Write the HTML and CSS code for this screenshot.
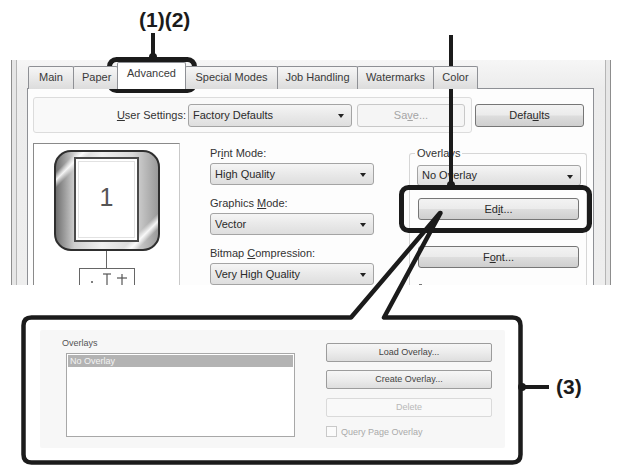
FILE: index.html
```html
<!DOCTYPE html>
<html>
<head>
<meta charset="utf-8">
<title>Advanced tab - Overlays</title>
<link rel="stylesheet" href="styles.css">
</head>
<body>
<div class="page">
  <div class="window">
    <div class="client">
      <div class="tabs">
        <div class="tab t-main">Main</div>
        <div class="tab t-paper">Paper</div>
        <div class="tab tab-active t-adv">Advanced</div>
        <div class="tab t-special">Special Modes</div>
        <div class="tab t-job">Job Handling</div>
        <div class="tab t-wm">Watermarks</div>
        <div class="tab t-color">Color</div>
      </div>
      <div class="pane">
        <div class="row-top">
          <div class="settings-panel">
            <span class="lbl-user"><u>U</u>ser Settings:</span>
            <div class="select sel-user">Factory Defaults<span class="arrow"></span></div>
            <div class="btn btn-disabled btn-save">Sa<u>v</u>e...</div>
          </div>
          <div class="btn btn-defaults">Defa<u>u</u>lts</div>
        </div>
        <div class="row-main">
          <div class="preview">
            <div class="frame">
              <div class="sheet"><span class="sheet-num">1</span></div>
            </div>
            <div class="stem"></div>
            <div class="bind-box">
              <svg class="bind-icon" width="54" height="18" viewBox="0 0 54 18">
                <line x1="12" y1="12" x2="12" y2="14" stroke="#555" stroke-width="1.5"/>
                <line x1="23" y1="5" x2="31" y2="5" stroke="#555" stroke-width="1.2"/>
                <line x1="27" y1="5" x2="27" y2="18" stroke="#555" stroke-width="1.2"/>
                <line x1="37" y1="9" x2="47" y2="9" stroke="#555" stroke-width="1.2"/>
                <line x1="42" y1="5" x2="42" y2="18" stroke="#555" stroke-width="1.2"/>
              </svg>
            </div>
          </div>
          <div class="fields">
            <div class="field">
              <div class="field-label">Pr<u>i</u>nt Mode:</div>
              <div class="select sel-field">High Quality<span class="arrow"></span></div>
            </div>
            <div class="field">
              <div class="field-label">Graphics <u>M</u>ode:</div>
              <div class="select sel-field">Vector<span class="arrow"></span></div>
            </div>
            <div class="field">
              <div class="field-label">Bitmap <u>C</u>ompression:</div>
              <div class="select sel-field">Very High Quality<span class="arrow"></span></div>
            </div>
          </div>
          <div class="group">
            <div class="legend">Overlays</div>
            <div class="select sel-overlay">No Overlay<span class="arrow"></span></div>
            <div class="btn btn-edit">Ed<u>i</u>t...</div>
            <div class="btn btn-font">F<u>o</u>nt...</div>
            <div class="stub"></div>
          </div>
        </div>
      </div>
    </div>
  </div>

  <div class="ov-panel">
    <div class="ov-left">
      <div class="ov-label">Overlays</div>
      <div class="listbox">
        <div class="list-item">No Overlay</div>
      </div>
    </div>
    <div class="ov-right">
      <div class="sbtn">Load Overlay...</div>
      <div class="sbtn">Create Overlay...</div>
      <div class="sbtn sbtn-disabled">Delete</div>
      <div class="check-row"><span class="check"></span><span>Query Page Overlay</span></div>
    </div>
  </div>
</div>

<svg class="annot" width="618" height="473" viewBox="0 0 618 473">
  <g stroke="#1b1b1b" fill="none" stroke-linejoin="round" stroke-linecap="butt">
    <line x1="153" y1="33" x2="153" y2="58" stroke-width="4"/>
    <rect x="109.5" y="59.5" width="85" height="31" rx="7" stroke-width="5"/>
    <line x1="451" y1="35" x2="451" y2="186" stroke-width="4"/>
    <rect x="401.5" y="187.5" width="188" height="43" rx="7" stroke-width="5"/>
    <path d="M351 317.5 L440 213 L440.5 213 L384 317.5 H512.5 Q520.5 317.5 520.5 325.5 V454.5 Q520.5 462.5 512.5 462.5 H31.5 Q23.5 462.5 23.5 454.5 V325.5 Q23.5 317.5 31.5 317.5 Z" stroke-width="4.5"/>
    <line x1="521" y1="387" x2="549" y2="387" stroke-width="4"/>
  </g>
  <g fill="#1b1b1b">
    <circle cx="153" cy="57" r="4"/>
    <circle cx="451" cy="185" r="4"/>
    <circle cx="522" cy="387" r="4"/>
  </g>
</svg>
<div class="callout-label label-12">(1)(2)</div>
<div class="callout-label label-3">(3)</div>
</body>
</html>
```

FILE: styles.css
```css
* { box-sizing: border-box; }
html, body { margin: 0; padding: 0; }
body {
  width: 618px;
  height: 473px;
  position: relative;
  overflow: hidden;
  background: #fff;
  font-family: "Liberation Sans", Arial, sans-serif;
  color: #333;
}
u { text-decoration: underline; text-underline-offset: 1px; }

.page { padding-top: 60px; }

/* ---------- dialog window ---------- */
.window {
  margin-left: 11px;
  width: 600px;
  height: 225px;
  overflow: hidden;
  border-left: 1px solid #8d8d8d;
  border-right: 1px solid #8d8d8d;
  background: #e6e6e6;
  padding: 0 4px;
}
.client {
  height: 100%;
  border-left: 1px solid #b5b5b5;
  border-right: 1px solid #b5b5b5;
  background: linear-gradient(#f6f6f6, #ececec 28px, #eeeeee);
  padding: 2px 11px 0 10px;
}
.tabs {
  display: flex;
  align-items: flex-end;
  height: 27px;
  margin-bottom: -1px;
  padding-left: 1px;
  position: relative;
  z-index: 2;
}
.tab {
  height: 23px;
  margin-right: -1px;
  border: 1px solid #8e9095;
  border-bottom: none;
  border-radius: 2px 2px 0 0;
  background: linear-gradient(#f6f6f6, #e9e9e9 50%, #dcdcdc);
  font-size: 11px;
  line-height: 21px;
  text-align: center;
  color: #3a3a3a;
  white-space: nowrap;
  overflow: hidden;
}
.tab-active {
  height: 27px;
  background: #fff;
  position: relative;
  z-index: 3;
  line-height: 20px;
}
.t-main { width: 46px; }
.t-paper { width: 45px; text-align: left; padding-left: 8px; }
.t-adv { width: 69px; }
.t-special { width: 93px; }
.t-job { width: 81px; }
.t-wm { width: 77px; }
.t-color { width: 45px; }

.pane {
  height: 200px;
  border: 1px solid #8e9095;
  background: #fdfdfd;
  padding: 8px 0 0 5px;
}

.row-top { display: flex; align-items: center; }
.settings-panel {
  width: 439px;
  height: 36px;
  border: 1px solid #dcdcdc;
  border-radius: 3px;
  background: #f9f9f9;
  display: flex;
  align-items: center;
}
.lbl-user {
  width: 152px;
  text-align: right;
  font-size: 11px;
  color: #333;
}
.select {
  position: relative;
  height: 23px;
  border: 1px solid #a4a4a4;
  border-radius: 3px;
  background: linear-gradient(#f5f5f5, #e9e9e9 50%, #dedede);
  font-size: 11px;
  line-height: 21px;
  padding-left: 4px;
  color: #2a2a2a;
  white-space: nowrap;
  overflow: hidden;
}
.arrow {
  position: absolute;
  right: 7px;
  top: 9px;
  width: 0;
  height: 0;
  border-left: 3.5px solid transparent;
  border-right: 3.5px solid transparent;
  border-top: 4px solid #222;
}
.sel-user { width: 164px; margin-left: 2px; }
.btn {
  height: 23px;
  border: 1px solid #767676;
  border-radius: 3px;
  background: linear-gradient(#f3f3f3, #ebebeb 48%, #dddddd 52%, #cfcfcf);
  font-size: 11px;
  line-height: 21px;
  text-align: center;
  color: #2a2a2a;
}
.btn-disabled {
  border-color: #c8c8c8;
  background: #f5f5f5;
  color: #a5a5a5;
}
.btn-save { width: 108px; margin-left: 5px; }
.btn-defaults { width: 109px; margin-left: 3px; }

.row-main { display: flex; align-items: flex-start; margin-top: 10px; }

.preview {
  width: 147px;
  height: 150px;
  border: 1px solid #8a8a8a;
  border-right-color: #c9c9c9;
  border-bottom: none;
  background: #fff;
  display: flex;
  flex-direction: column;
  align-items: center;
  padding-top: 6px;
}
.frame {
  width: 106px;
  height: 101px;
  border: 2px solid #2e2e2e;
  border-radius: 17px;
  background:
    linear-gradient(135deg, rgba(255,255,255,0) 10%, rgba(255,255,255,0.9) 14%, rgba(255,255,255,0) 18%, rgba(255,255,255,0) 82%, rgba(255,255,255,0.9) 86%, rgba(255,255,255,0) 90%),
    linear-gradient(90deg, #6f6f6f, #cfcfcf 18%, #efefef 45%, #d9d9d9 75%, #9a9a9a);
  display: flex;
  justify-content: center;
  padding-top: 5px;
}
.sheet {
  width: 65px;
  height: 85px;
  border: 2px solid #4a4a4a;
  background: #fff;
  box-shadow: inset 0 0 0 2px #fff, inset 0 0 0 3px #e2e2e2;
  display: flex;
  align-items: center;
  justify-content: center;
}
.sheet-num { font-size: 25px; color: #555; margin-top: -4px; }
.stem { width: 1px; height: 17px; background: #666; }
.bind-box {
  width: 56px;
  height: 20px;
  border: 1px solid #666;
  border-bottom: none;
}
.bind-icon { display: block; }

.fields { width: 164px; margin-left: 30px; padding-top: 3px; }
.field + .field { margin-top: 11px; }
.field-label {
  font-size: 11px;
  line-height: 14px;
  margin-bottom: 3px;
  color: #333;
}
.sel-field { height: 22px; line-height: 20px; }

.group {
  width: 178px;
  height: 150px;
  margin-left: 35px;
  margin-top: 10px;
  border: 1px solid #d6d6d6;
  border-bottom: none;
  border-radius: 3px 3px 0 0;
  padding: 0 5px 0 7px;
}
.legend {
  width: fit-content;
  margin: -8px 0 0 -2px;
  padding: 0 2px;
  background: #fdfdfd;
  font-size: 11px;
  line-height: 14px;
  color: #333;
}
.sel-overlay { width: 164px; height: 21px; line-height: 19px; margin-top: 5px; }
.btn-edit { width: 161px; height: 22px; line-height: 20px; margin: 12px 0 0 1px; }
.btn-font { width: 161px; height: 22px; line-height: 20px; margin: 26px 0 0 1px; }
.stub { width: 3px; height: 1px; background: #777; margin: 16px 0 0 2px; }

/* ---------- overlay settings panel in callout ---------- */
.ov-panel {
  margin: 45px 0 0 40px;
  width: 465px;
  height: 118px;
  background: #f7f7f7;
  border-radius: 2px;
  display: flex;
  padding: 7px 0 0 22px;
}
.ov-left { width: 233px; }
.ov-label { font-size: 9px; line-height: 12px; color: #555; }
.listbox {
  width: 229px;
  height: 84px;
  margin: 4px 0 0 4px;
  border: 1px solid #a8a8a8;
  background: #fff;
  padding: 1px;
}
.list-item {
  height: 12px;
  background: #b3b3b3;
  color: #f4f4f4;
  font-size: 9px;
  line-height: 12px;
  padding-left: 2px;
}
.ov-right { margin: 6px 0 0 31px; width: 166px; }
.sbtn {
  height: 19px;
  border: 1px solid #9c9c9c;
  border-radius: 2px;
  background: linear-gradient(#f6f6f6, #ececec 50%, #dedede);
  font-size: 9px;
  line-height: 17px;
  text-align: center;
  color: #444;
}
.sbtn + .sbtn { margin-top: 8px; }
.sbtn-disabled { border-color: #dadada; background: #f9f9f9; color: #b8b8b8; margin-top: 9px !important; }
.check-row {
  display: flex;
  align-items: center;
  margin-top: 9px;
  font-size: 9px;
  color: #aaa;
}
.check {
  width: 11px;
  height: 11px;
  border: 1px solid #c9c9c9;
  background: #fbfbfb;
  margin-right: 4px;
}

/* ---------- annotations ---------- */
.annot { position: absolute; left: 0; top: 0; pointer-events: none; }
.callout-label {
  position: absolute;
  font-family: "Liberation Sans", Arial, sans-serif;
  font-weight: bold;
  font-size: 21px;
  line-height: 22px;
  color: #1b1b1b;
}
.label-12 { left: 139px; top: 9px; }
.label-3 { left: 556px; top: 376px; }
```
